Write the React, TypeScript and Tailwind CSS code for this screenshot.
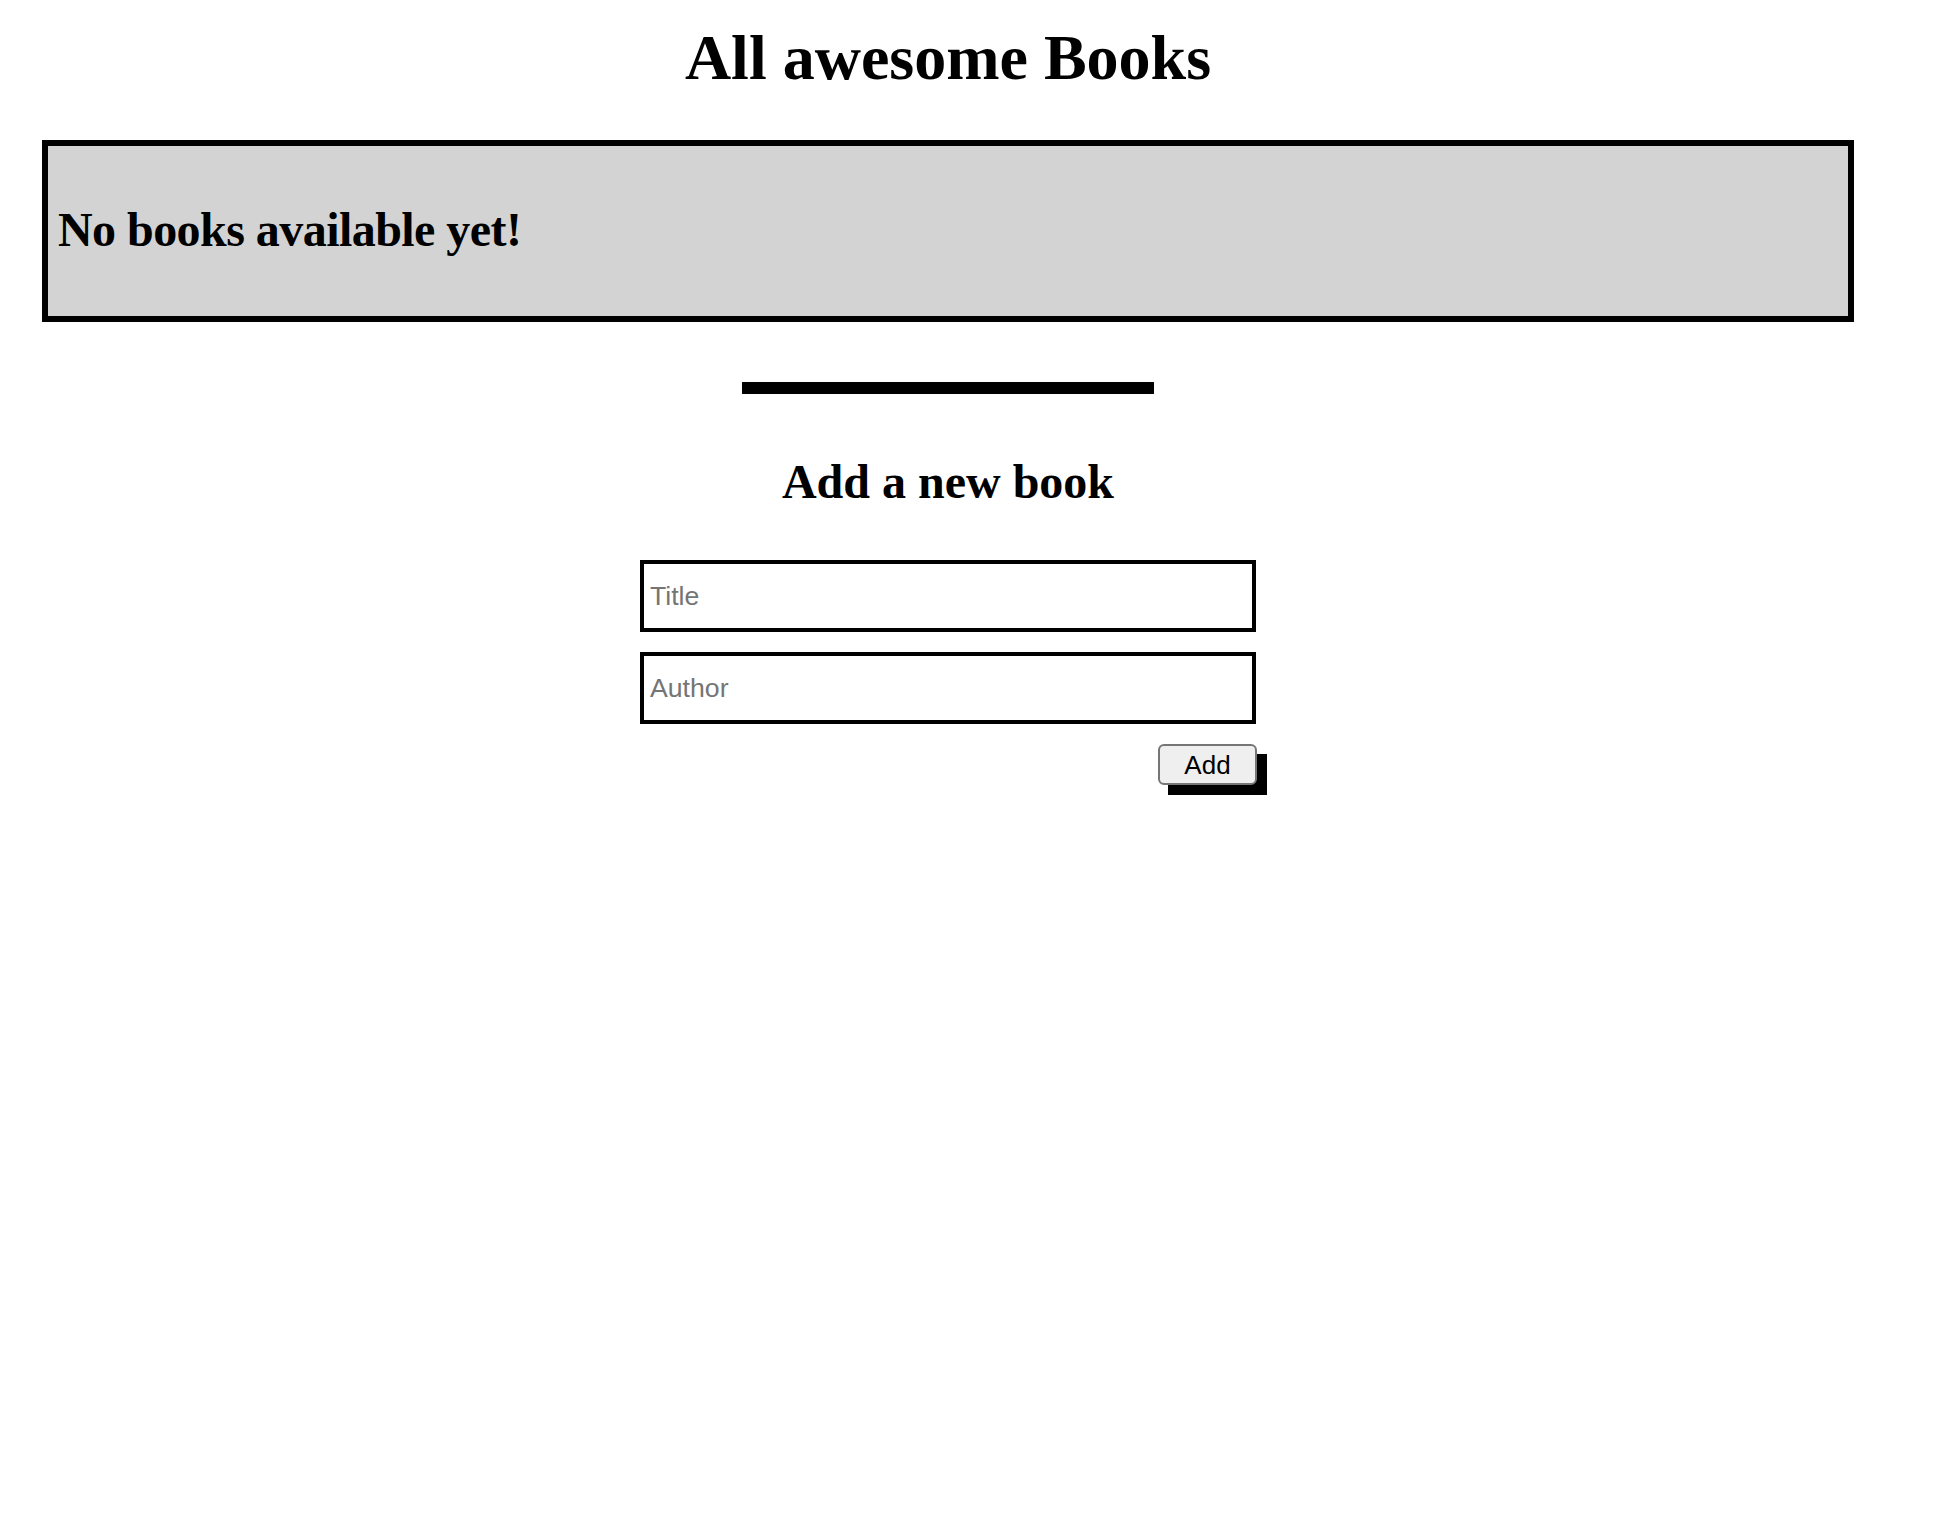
import React from "react";

export default function App() {
  return (
    <div className="w-[1896px] min-h-[1530px] bg-white text-black font-['Liberation_Serif','Times_New_Roman',serif]">
      <h1 className="mt-[22px] text-center text-[64px] leading-[71px] font-bold">
        All awesome Books
      </h1>

      <section className="mt-[47px] mx-[42px] h-[182px] border-[6px] border-black bg-[#d3d3d3] pl-[10px] pt-[57px]">
        <h2 className="text-[48px] leading-[53px] font-bold tracking-[-0.55px]">No books available yet!</h2>
      </section>

      <div className="mt-[60px] mx-auto w-[412px] h-[12px] bg-black" />

      <h2 className="mt-[61px] text-center text-[48px] leading-[53px] font-bold">Add a new book</h2>

      <form
        className="mt-[52px] mx-auto w-[616px] flex flex-col gap-[20px]"
        onSubmit={(e) => e.preventDefault()}
      >
        <input
          type="text"
          placeholder="Title"
          className="h-[72px] w-full border-4 border-black bg-white px-[6px] text-[26.67px] font-['Liberation_Sans',Arial,sans-serif] text-black placeholder:text-[#757575] outline-none"
        />
        <input
          type="text"
          placeholder="Author"
          className="h-[72px] w-full border-4 border-black bg-white px-[6px] text-[26.67px] font-['Liberation_Sans',Arial,sans-serif] text-black placeholder:text-[#757575] outline-none"
        />
        <div className="relative self-end mr-[-1px] w-[99px] h-[41px]">
          <div className="absolute left-[10px] top-[10px] w-[99px] h-[41px] bg-black" />
          <button
            type="submit"
            className="relative w-[99px] h-[41px] bg-[#efefef] border-2 border-[#767676] rounded-[6px] text-[26px] leading-none font-['Liberation_Sans',Arial,sans-serif] text-black"
          >
            Add
          </button>
        </div>
      </form>
    </div>
  );
}
